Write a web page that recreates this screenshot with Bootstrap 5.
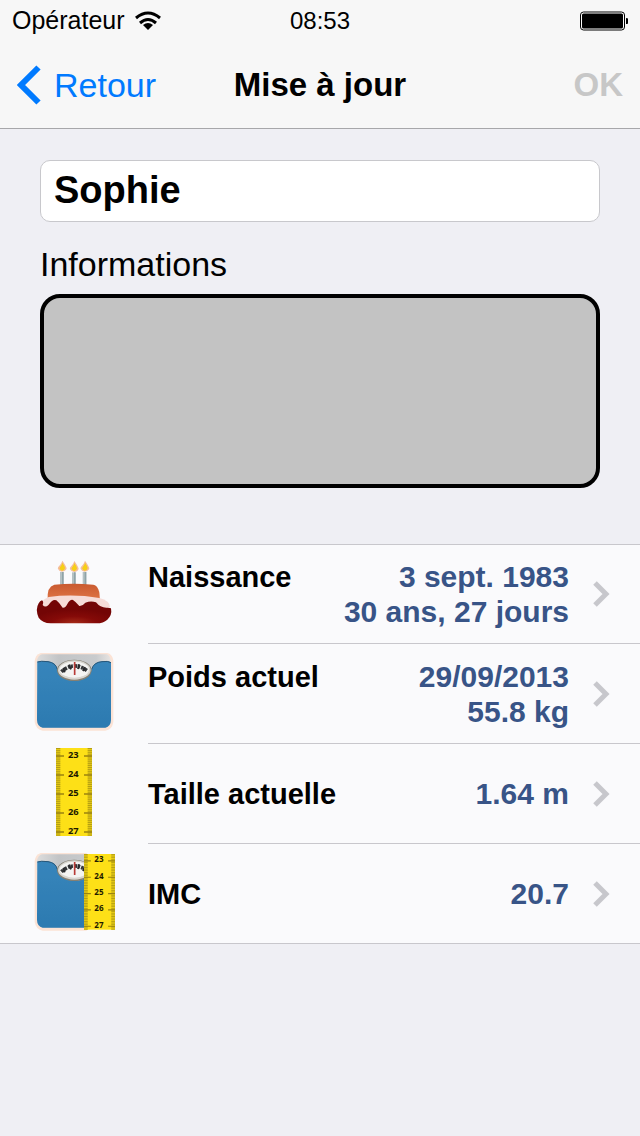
<!DOCTYPE html>
<html lang="fr">
<head>
<meta charset="utf-8">
<meta name="viewport" content="width=device-width, initial-scale=1">
<title>Mise à jour</title>
<link href="https://cdn.jsdelivr.net/npm/bootstrap@5.3.0/dist/css/bootstrap.min.css" rel="stylesheet">
<style>
  body { background: #efeff4; color: #000; font-family: "Liberation Sans", Arial, sans-serif; }
  .top-area { background: #f7f7f7; border-bottom: 1px solid #a7a7aa; }
  .three-cols { display: grid; grid-template-columns: 1fr auto 1fr; align-items: center; }
  .status-line { height: 41px; padding: 0 12px; font-size: 24px; line-height: 41px; }
  .operator { font-size: 25px; gap: 10px; }
  .title-line { height: 87px; padding: 0 17px; font-size: 34px; line-height: 40px; }
  .title-line h1, .ok-btn { font-size: 33px; line-height: 40px; font-weight: 700; }
  .back-link { color: #007aff; gap: 12px; }
  .ok-btn, .ok-btn:disabled { color: #c7c7c7; border: 0; opacity: 1; }
  .profile { padding: 31px 40px 56px; }
  .name-box, .name-box:focus { height: 62px; padding: 0 13px 2px; border: 1px solid #c8c8cc; border-radius: 10px; background: #fff; color: #000; font-size: 38px; font-weight: 700; line-height: 44px; }
  .info-label { margin: 22px 0 10px; font-size: 34px; line-height: 40px; }
  .info-box, .info-box:focus { height: 194px; border: 4px solid #000; border-radius: 20px; background: #c3c3c3; resize: none; font-size: 30px; }
  .facts { background: #fafafc; border-top: 1px solid #c8c7cc; border-bottom: 1px solid #c8c7cc; font-size: 29px; line-height: 35px; font-weight: 700; }
  .fact-link { height: 100px; color: #000; }
  li:first-child .fact-link, li:last-child .fact-link { height: 99px; }
  .fact-body { padding-right: 30px; border-bottom: 1px solid #c8c7cc; }
  li:last-child .fact-body { border-bottom: 0; }
  .fact-value { color: #385487; font-size: 30px; }
  .fact-gap { gap: 24px; }
  .ruler-text { font-family: "Open Sans", sans-serif; font-size: 28px; font-weight: 700; text-anchor: middle; fill: #1d1a00; }
</style>
</head>
<body class="min-vh-100">

<!-- Shared drawings -->
<svg width="0" height="0" class="position-absolute" aria-hidden="true">
  <defs>
    <linearGradient id="blueMat" x1="0" y1="0" x2="0" y2="1"><stop offset="0" stop-color="#3c8cc2"/><stop offset="1" stop-color="#2f7fb5"/></linearGradient>
    <linearGradient id="sponge" x1="0" y1="0" x2="0" y2="1"><stop offset="0" stop-color="#c95a30"/><stop offset="1" stop-color="#df7445"/></linearGradient>
    <radialGradient id="jelly" cx=".5" cy="1" r=".6"><stop offset="0" stop-color="#a52a18"/><stop offset=".5" stop-color="#850a08"/><stop offset="1" stop-color="#730505"/></radialGradient>
    <linearGradient id="chrome" x1="0" y1="0" x2="1" y2="0"><stop offset="0" stop-color="#ddd"/><stop offset=".3" stop-color="#c2c4c6"/><stop offset=".8" stop-color="#c9cbcd"/><stop offset="1" stop-color="#e8e4e2"/></linearGradient>
    <pattern id="minorTicks" width="108" height="5.7" patternUnits="userSpaceOnUse"><path d="M0 1.5H13M95 1.5H108" stroke="#a08c10" stroke-width="2.2"/></pattern>
    <pattern id="weave" width="12" height="12" patternUnits="userSpaceOnUse"><path d="M0 3H12M0 9H12" stroke="#1f689c" stroke-width="3" opacity=".4"/></pattern>
    <g id="scale">
      <path d="M62 39H262Q277 42 280 62V246Q276 270 256 272H68Q48 269 44 246V66Q45 44 62 39Z" fill="#fbe3d6"/>
      <path d="M66 43H260Q271 46 273 66V90H50V66Q53 46 66 43Z" fill="url(#chrome)"/>
      <path d="M52 65Q62 61 84 64Q108 67 112 88Q122 121 163 122Q207 121 215 88Q221 66 246 64Q264 61 273 67V240Q272 260 256 263H68Q52 260 51 240Z" fill="url(#blueMat)"/>
      <path d="M52 65Q62 61 84 64Q108 67 112 88Q122 121 163 122Q207 121 215 88Q221 66 246 64Q264 61 273 67V240Q272 260 256 263H68Q52 260 51 240Z" fill="url(#weave)"/>
      <path d="M52 66Q62 62 84 65Q107 68 112 88M215 88Q221 67 246 65Q264 62 273 68" fill="none" stroke="#285779" stroke-width="3"/>
      <ellipse cx="163" cy="91" rx="52" ry="32" fill="#858073"/>
      <ellipse cx="163" cy="90" rx="49" ry="29" fill="#d8d6d0"/>
      <ellipse cx="163" cy="89" rx="44" ry="24" fill="#f4f4f2"/>
      <path d="M124 95Q163 61 204 94" fill="none" stroke="#343638" stroke-width="11" stroke-dasharray="7 3 10 4 5 3"/>
      <path d="M130 84L134 97M147 74L153 88M177 73L174 87M194 81L189 93" stroke="#292a2d" stroke-width="6"/>
      <path d="M164 66V105" stroke="#b83b36" stroke-width="5"/>
    </g>
    <g id="ruler">
      <rect width="108" height="264" fill="#fde017"/>
      <rect width="13" height="264" fill="#e8cc16"/><rect x="95" width="13" height="264" fill="#e8cc16"/>
      <rect width="108" height="264" fill="url(#minorTicks)"/>
      <path d="M0 24H24M84 24H108M0 81H24M84 81H108M0 138H24M84 138H108M0 195H24M84 195H108M0 252H24M84 252H108" stroke="#9a8310" stroke-width="4"/>
      <g class="ruler-text"><text x="52" y="29">23</text><text x="52" y="86">24</text><text x="52" y="143">25</text><text x="52" y="200">26</text><text x="52" y="257">27</text></g>
    </g>
    <g id="candle">
      <path d="M0 30V69" stroke="#b4c0c3" stroke-width="12"/><path d="M2 30V69" stroke="#8fa3a7" stroke-width="4"/>
      <path d="M1 -4C-3 10-14 13-12 21Q-8 29 0 29Q12 28 14 19Q12 11 1-4Z" fill="#f5bd9c"/>
      <path d="M1 2C0 11-8 15-7 20Q-4 26 1 26Q8 25 9 18Q8 12 1 2Z" fill="#f6cf16"/>
    </g>
  </defs>
</svg>

<header class="top-area">
  <div class="status-line three-cols">
    <div class="operator d-flex align-items-center">
      <span>Opérateur</span>
      <svg width="26" height="20" viewBox="0 0 26 20" aria-hidden="true">
        <g fill="none" stroke="#000" stroke-width="3"><path d="M1 7Q13-3 25 7"/><path d="M5 12Q13 5 21 12"/></g>
        <path d="M8 14Q13 10 18 14L13 19Z"/>
      </svg>
    </div>
    <div>08:53</div>
    <svg class="ms-auto" width="48" height="20" viewBox="0 0 48 20" aria-hidden="true">
      <rect x=".5" y="1" width="44" height="18" rx="3" fill="#fff" stroke="#000" stroke-width="1"/>
      <rect x="2" y="2.500" width="41" height="15" rx="1.500"/><path d="M46 7Q49 7 49 10Q49 13 46 13Z"/>
    </svg>
  </div>
  <nav class="title-line three-cols">
    <a href="#" class="back-link d-flex align-items-center text-decoration-none">
      <svg width="25" height="40" viewBox="0 0 25 40" aria-hidden="true"><path d="M21.500 2.500L4 20L21.500 37.500" fill="none" stroke="#007aff" stroke-width="6"/></svg>
      <span>Retour</span>
    </a>
    <h1 class="m-0">Mise à jour</h1>
    <button type="button" class="ok-btn btn p-0 ms-auto" disabled>OK</button>
  </nav>
</header>

<main>
  <form class="profile">
    <input type="text" class="name-box form-control" value="Sophie" aria-label="Nom">
    <label for="infos" class="info-label d-block">Informations</label>
    <textarea id="infos" class="info-box form-control"></textarea>
  </form>

  <ul class="facts list-unstyled m-0">
    <li>
      <a href="#" class="fact-link d-flex text-decoration-none">
        <svg class="flex-shrink-0" width="148" height="99" viewBox="-60 15 444 297" aria-hidden="true">
          <use href="#candle" x="126" y="66"/><use href="#candle" x="162" y="67"/><use href="#candle" x="194" y="66"/>
          <path d="M83 180Q80 140 103 134Q160 128 220 134Q241 139 239 180Z" fill="url(#sponge)"/>
          <path d="M62 188Q72 176 86 171Q160 161 238 174Q270 182 270 202L240 216H80Z" fill="#f6dcd8"/>
          <path d="M66 181Q72 184 68 195Q76 205 86 194Q98 176 109 181Q119 189 128 203Q137 204 142 192Q151 177 159 180Q167 185 178 198Q187 199 196 188Q213 181 228 187Q242 205 263 203L273 205Q277 226 262 239Q250 250 230 250H92Q67 249 56 233Q45 208 56 190Q60 183 66 181Z" fill="url(#jelly)"/>
        </svg>
        <div class="fact-body fact-gap flex-grow-1 d-flex align-items-center">
          <div class="flex-grow-1 d-flex justify-content-between align-items-baseline">
            <span>Naissance</span>
            <span class="fact-value text-end">3 sept. 1983<br>30 ans, 27 jours</span>
          </div>
          <svg width="17" height="26" viewBox="0 0 17 26" aria-hidden="true"><path d="M2 2L13 13L2 24" fill="none" stroke="#c7c7cc" stroke-width="5"/></svg>
        </div>
      </a>
    </li>
    <li>
      <a href="#" class="fact-link d-flex text-decoration-none">
        <svg class="flex-shrink-0" width="148" height="99" viewBox="-60 12 444 297" aria-hidden="true"><use href="#scale"/></svg>
        <div class="fact-body fact-gap flex-grow-1 d-flex align-items-center">
          <div class="flex-grow-1 d-flex justify-content-between align-items-baseline">
            <span>Poids actuel</span>
            <span class="fact-value text-end">29/09/2013<br>55.8 kg</span>
          </div>
          <svg width="17" height="26" viewBox="0 0 17 26" aria-hidden="true"><path d="M2 2L13 13L2 24" fill="none" stroke="#c7c7cc" stroke-width="5"/></svg>
        </div>
      </a>
    </li>
    <li>
      <a href="#" class="fact-link d-flex text-decoration-none">
        <svg class="flex-shrink-0" width="148" height="99" viewBox="-60 12 444 297" aria-hidden="true"><use href="#ruler" x="108" y="24"/></svg>
        <div class="fact-body fact-gap flex-grow-1 d-flex align-items-center">
          <div class="flex-grow-1 d-flex justify-content-between align-items-baseline">
            <span>Taille actuelle</span>
            <span class="fact-value text-end">1.64 m</span>
          </div>
          <svg width="17" height="26" viewBox="0 0 17 26" aria-hidden="true"><path d="M2 2L13 13L2 24" fill="none" stroke="#c7c7cc" stroke-width="5"/></svg>
        </div>
      </a>
    </li>
    <li>
      <a href="#" class="fact-link d-flex text-decoration-none">
        <svg class="flex-shrink-0" width="148" height="99" viewBox="-60 12 444 297" aria-hidden="true">
          <clipPath id="leftPart"><rect x="40" y="30" width="160" height="250"/></clipPath>
          <use href="#scale" clip-path="url(#leftPart)"/>
          <g transform="translate(192 42) scale(.86)"><use href="#ruler"/></g>
        </svg>
        <div class="fact-body fact-gap flex-grow-1 d-flex align-items-center">
          <div class="flex-grow-1 d-flex justify-content-between align-items-baseline">
            <span>IMC</span>
            <span class="fact-value text-end">20.7</span>
          </div>
          <svg width="17" height="26" viewBox="0 0 17 26" aria-hidden="true"><path d="M2 2L13 13L2 24" fill="none" stroke="#c7c7cc" stroke-width="5"/></svg>
        </div>
      </a>
    </li>
  </ul>
</main>

<script src="https://cdn.jsdelivr.net/npm/bootstrap@5.3.0/dist/js/bootstrap.bundle.min.js"></script>
</body>
</html>
